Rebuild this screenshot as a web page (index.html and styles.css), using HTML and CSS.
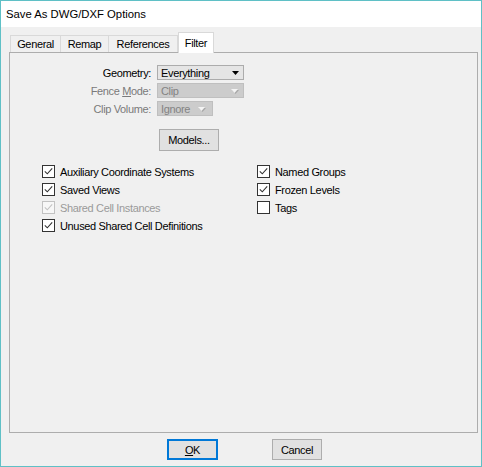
FILE: index.html
```html
<!DOCTYPE html>
<html>
<head>
<meta charset="utf-8">
<title>Save As DWG/DXF Options</title>
<link rel="stylesheet" href="styles.css">
</head>
<body>
<div class="window">
  <div class="titlebar">Save As DWG/DXF Options</div>
  <div class="client">
    <div class="tabs">
      <div class="tab t-general">General</div>
      <div class="tab t-remap">Remap</div>
      <div class="tab t-refs">References</div>
      <div class="tab active">Filter</div>
    </div>
    <div class="panel">
      <div class="form">
        <div class="lbl">Geometry:</div>
        <div class="combo w-long">
          <span>Everything</span>
          <svg class="arrow" width="7" height="4" viewBox="0 0 7 4"><path d="M0 0H7L3.5 4Z" fill="#000"/></svg>
        </div>
        <div class="lbl dis">Fence <u>M</u>ode:</div>
        <div class="combo dis w-long">
          <span>Clip</span>
          <svg class="arrow" width="8" height="5" viewBox="0 0 8 5"><path d="M1 1H8L4.5 5Z" fill="#a8a8a8"/><path d="M0 0H7L3.5 4Z" fill="#f4f4f4"/></svg>
        </div>
        <div class="lbl dis">Clip Volume:</div>
        <div class="combo dis w-short">
          <span>Ignore</span>
          <svg class="arrow" width="8" height="5" viewBox="0 0 8 5"><path d="M1 1H8L4.5 5Z" fill="#a8a8a8"/><path d="M0 0H7L3.5 4Z" fill="#f4f4f4"/></svg>
        </div>
      </div>
      <div class="models-row"><button class="btn models">Models...</button></div>
      <div class="checks">
        <div class="col col-left">
          <div class="cb"><span class="box"><svg width="11" height="11" viewBox="0 0 11 11"><path d="M1.8 5.3L4.3 7.8L9.2 2.4" fill="none" stroke="#333" stroke-width="1.1"/></svg></span><span>Auxiliary Coordinate Systems</span></div>
          <div class="cb"><span class="box"><svg width="11" height="11" viewBox="0 0 11 11"><path d="M1.8 5.3L4.3 7.8L9.2 2.4" fill="none" stroke="#333" stroke-width="1.1"/></svg></span><span>Saved Views</span></div>
          <div class="cb dis"><span class="box"><svg width="11" height="11" viewBox="0 0 11 11"><path d="M1.8 5.3L4.3 7.8L9.2 2.4" fill="none" stroke="#c2c2c2" stroke-width="1.1"/></svg></span><span>Shared Cell Instances</span></div>
          <div class="cb"><span class="box"><svg width="11" height="11" viewBox="0 0 11 11"><path d="M1.8 5.3L4.3 7.8L9.2 2.4" fill="none" stroke="#333" stroke-width="1.1"/></svg></span><span>Unused Shared Cell Definitions</span></div>
        </div>
        <div class="col">
          <div class="cb"><span class="box"><svg width="11" height="11" viewBox="0 0 11 11"><path d="M1.8 5.3L4.3 7.8L9.2 2.4" fill="none" stroke="#333" stroke-width="1.1"/></svg></span><span>Named Groups</span></div>
          <div class="cb"><span class="box"><svg width="11" height="11" viewBox="0 0 11 11"><path d="M1.8 5.3L4.3 7.8L9.2 2.4" fill="none" stroke="#333" stroke-width="1.1"/></svg></span><span>Frozen Levels</span></div>
          <div class="cb"><span class="box"></span><span>Tags</span></div>
        </div>
      </div>
    </div>
    <div class="footer">
      <button class="btn ok default"><u>O</u>K</button>
      <button class="btn cancel">Cancel</button>
    </div>
  </div>
</div>
</body>
</html>
```
FILE: styles.css
```css
html, body {
  margin: 0;
  padding: 0;
  background: #ffffff;
}
body {
  font-family: "Liberation Sans", Arial, sans-serif;
  font-size: 11px;
  letter-spacing: -0.35px;
  color: #000;
}
.window {
  width: 482px;
  height: 467px;
  box-sizing: border-box;
  border: 1px solid #5fc0c6;
  display: flex;
  flex-direction: column;
  background: #f0f0f0;
}
.titlebar {
  height: 26px;
  background: #ffffff;
  display: flex;
  align-items: center;
  padding-left: 5px;
  font-size: 11.3px;
  letter-spacing: 0;
  flex: none;
}
.client {
  flex: 1;
  display: flex;
  flex-direction: column;
  padding-top: 5px;
}
.tabs {
  display: flex;
  align-items: flex-end;
  height: 20px;
  margin-left: 9px;
  position: relative;
  z-index: 1;
}
.tab {
  height: 17px;
  box-sizing: border-box;
  border-left: 1px solid #d9d9d9;
  border-top: 1px solid #d9d9d9;
  display: flex;
  align-items: center;
  justify-content: center;
  background: #f0f0f0;
}
.t-general { width: 50px; }
.t-remap { width: 48px; }
.t-refs { width: 70px; border-right: 1px solid #d9d9d9; }
.tab.active {
  width: 36px;
  height: 21px;
  margin-bottom: -1px;
  background: #ffffff;
  border: 1px solid #d9d9d9;
  border-bottom: none;
  padding-bottom: 1px;
}
.panel {
  margin-left: 8px;
  width: 469px;
  height: 381px;
  box-sizing: border-box;
  border: 1px solid #adadad;
  padding-top: 12px;
  flex: none;
}
.form {
  display: grid;
  grid-template-columns: 141px auto;
  column-gap: 6px;
  row-gap: 3px;
  align-items: center;
  justify-items: start;
}
.lbl {
  justify-self: end;
  white-space: nowrap;
}
.lbl.dis { color: #7a7a7a; }
.combo {
  height: 15px;
  box-sizing: border-box;
  border: 1px solid #acacac;
  background: #e5e5e5;
  display: flex;
  align-items: center;
  justify-content: space-between;
  padding: 0 4px 0 3px;
}
.combo.dis {
  background: #cccccc;
  border-color: #bfbfbf;
  color: #838383;
}
.combo.dis .arrow { margin-top: 1px; }
.w-long { width: 87px; }
.w-short { width: 56px; padding-right: 6px; }
.arrow { display: block; }
.models-row {
  margin-top: 13px;
  padding-left: 149px;
  display: flex;
}
.btn {
  height: 21px;
  box-sizing: border-box;
  background: #e1e1e1;
  border: 1px solid #adadad;
  font: inherit;
  letter-spacing: inherit;
  color: #000;
  padding: 0;
  margin: 0;
}
.models { width: 60px; height: 22px; }
.checks {
  display: flex;
  margin-top: 14px;
  padding-left: 32px;
}
.col {
  display: flex;
  flex-direction: column;
  gap: 5px;
}
.col-left { width: 215px; }
.cb {
  display: flex;
  align-items: center;
  gap: 5px;
  height: 13px;
  white-space: nowrap;
}
.box {
  width: 13px;
  height: 13px;
  box-sizing: border-box;
  border: 1px solid #333333;
  background: #ffffff;
  display: flex;
  flex: none;
}
.box svg { display: block; }
.cb.dis { color: #9a9a9a; }
.cb.dis .box { border-color: #c2c2c2; background: #f7f7f7; }
.footer {
  display: flex;
  padding-top: 6px;
  padding-left: 166px;
  gap: 54px;
}
.ok { width: 51px; }
.cancel { width: 50px; }
.btn.default { border: 2px solid #0078d7; }
```
